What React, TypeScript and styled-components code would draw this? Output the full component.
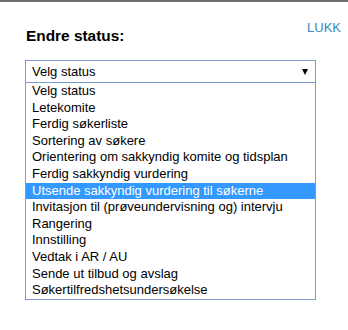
import styled, { createGlobalStyle } from 'styled-components';

const statuses = [
    'Velg status',
    'Letekomite',
    'Ferdig søkerliste',
    'Sortering av søkere',
    'Orientering om sakkyndig komite og tidsplan',
    'Ferdig sakkyndig vurdering',
    'Utsende sakkyndig vurdering til søkerne',
    'Invitasjon til (prøveundervisning og) intervju',
    'Rangering',
    'Innstilling',
    'Vedtak i AR / AU',
    'Sende ut tilbud og avslag',
    'Søkertilfredshetsundersøkelse',
];

const GlobalStyle = createGlobalStyle`
    body {
        margin: 0;
        background: #fff;
        font-family: 'Liberation Sans', Arial, sans-serif;
        color: #000;
    }
`;

export default function App() {
    return (
        <>
            <GlobalStyle />
            <TopBar />
            <Dialog>
                <Header>
                    <Title>Endre status:</Title>
                    <Close href='#'>LUKK</Close>
                </Header>

                <SelectBox>
                    <span>Velg status</span>
                    <Arrow />
                </SelectBox>

                <List>
                    {statuses.map((s, i) => (
                        <Option key={s} $active={i === 6}>
                            {s}
                        </Option>
                    ))}
                </List>
            </Dialog>
        </>
    );
}

const TopBar = styled.div`
    height: 2px;
    background: #6f6f6f;
`;

const Dialog = styled.div`
    padding: 0 32px 0 25px;
    width: 291px;
`;

const Header = styled.div`
    display: flex;
    justify-content: space-between;
    align-items: flex-start;
    position: relative;
    height: 58px;
`;

const Title = styled.h3`
    margin: 25px 0 0 1px;
    font-size: 15.4px;
    font-weight: bold;
    line-height: 18px;
`;

const Close = styled.a`
    position: absolute;
    right: -25px;
    top: 18px;
    font-size: 13px;
    line-height: 16px;
    color: #3a88c4;
    text-decoration: none;
`;

const SelectBox = styled.div`
    display: flex;
    align-items: center;
    justify-content: space-between;
    height: 21px;
    padding: 0 7px 0 6px;
    border: 1px solid #7b9bd6;
    font-size: 13px;
`;

const Arrow = styled.span`
    width: 0;
    height: 0;
    border-left: 3.5px solid transparent;
    border-right: 3.5px solid transparent;
    border-top: 6px solid #000;
`;

const List = styled.div`
    border: 1px solid #7b9bd6;
    border-top: none;
    font-size: 13px;
`;

const Option = styled.div<{ $active?: boolean }>`
    height: 16.6px;
    line-height: 16.6px;
    padding-left: 6px;
    white-space: nowrap;
    background: ${(p) => (p.$active ? '#3399ff' : 'transparent')};
    color: ${(p) => (p.$active ? '#fff' : '#000')};
`;
